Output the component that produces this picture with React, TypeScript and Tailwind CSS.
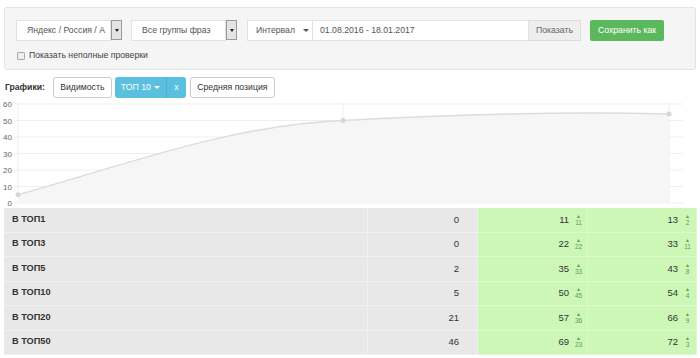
import React from "react";

const rows = [
  { label: "В ТОП1", a: 0, b: 11, bd: 11, c: 13, cd: 2 },
  { label: "В ТОП3", a: 0, b: 22, bd: 22, c: 33, cd: 11 },
  { label: "В ТОП5", a: 2, b: 35, bd: 33, c: 43, cd: 8 },
  { label: "В ТОП10", a: 5, b: 50, bd: 45, c: 54, cd: 4 },
  { label: "В ТОП20", a: 21, b: 57, bd: 36, c: 66, cd: 9 },
  { label: "В ТОП50", a: 46, b: 69, bd: 23, c: 72, cd: 3 },
];

const font = { fontFamily: '"Liberation Sans", Arial, sans-serif' };

function SelectBox({ text, width }: { text: string; width: string }) {
  return (
    <div className="flex h-[21px]">
      <div className={`${width} h-full bg-white border border-[#e2e2e2] flex items-center pl-[10px] text-[8.7px] text-[#555] whitespace-nowrap`}>
        {text}
      </div>
      <div className="w-[11px] h-[20px] bg-[#e4e4e4] border border-[#9a9a9a] flex items-center justify-center">
        <span className="block w-0 h-0 border-l-[2.5px] border-r-[2.5px] border-t-[3px] border-l-transparent border-r-transparent border-t-[#222]" />
      </div>
    </div>
  );
}

function Cell({ value, delta, green }: { value: number; delta?: number; green?: boolean }) {
  return (
    <div className={`flex items-center justify-end pr-[2px] border-b border-r ${green ? "bg-[#cdf7b7] border-[#dcf9cc]" : "bg-[#e8e8e8] border-[#f1f1f1]"}`}>
      <span className="text-[9.5px] text-[#333] pr-[3px]">{value}</span>
      <span className="w-[13px] flex flex-col items-center leading-none text-[#5aa046]">
        {delta !== undefined && (
          <>
            <span className="text-[5px] leading-[6px]">▲</span>
            <span className="text-[6.5px] leading-[8px]">{delta}</span>
          </>
        )}
      </span>
    </div>
  );
}

function Chart() {
  const y = (v: number) => 103 - v * 1.65;
  const ticks = [0, 10, 20, 30, 40, 50, 60];
  const line = `M18,${y(5)} C130,${y(24)} 230,${y(47)} 343,${y(50)} C450,${y(53.6)} 560,${y(55.5)} 669,${y(54)}`;
  return (
    <svg width="700" height="107" className="block">
      {ticks.map((t) => (
        <g key={t}>
          <line x1="15" x2="683" y1={y(t)} y2={y(t)} stroke="#efefef" strokeWidth="1" />
          <text x="12" y={y(t) + 3} textAnchor="end" fontSize="8" fill="#666" style={font}>
            {t}
          </text>
        </g>
      ))}
      {[18, 343, 669].map((x) => (
        <line key={x} x1={x} x2={x} y1={y(60) - 2} y2={y(0)} stroke="#f0f0f0" strokeWidth="1" />
      ))}
      <path d={`${line} L669,${y(0)} L18,${y(0)} Z`} fill="#f6f6f6" />
      <path d={line} fill="none" stroke="#dcdcdc" strokeWidth="1.5" />
      {[
        [18, 5],
        [343, 50],
        [669, 54],
      ].map(([x, v]) => (
        <circle key={x} cx={x} cy={y(v)} r="2.5" fill="#d6d6d6" />
      ))}
    </svg>
  );
}

export default function App() {
  return (
    <div className="w-[700px] h-[358px] bg-white overflow-hidden text-[#333]" style={font}>
      <div className="mx-[4px] mt-[7px] h-[63px] bg-[#f5f5f5] border border-[#e3e3e3] rounded-[3px] pl-[11px] pt-[12px]">
        <div className="flex items-center">
          <SelectBox text="Яндекс / Россия / А" width="w-[95px]" />
          <div className="w-[9px]" />
          <SelectBox text="Все группы фраз" width="w-[95px]" />
          <div className="w-[10px]" />
          <div className="flex h-[21px]">
            <div className="w-[66px] bg-white border border-[#e2e2e2] flex items-center pl-[8px] text-[8.7px] text-[#555] whitespace-nowrap">
              Интервал
              <span className="ml-[8px] block w-0 h-0 border-l-[3px] border-r-[3px] border-t-[3px] border-l-transparent border-r-transparent border-t-[#555]" />
            </div>
            <div className="w-[216px] bg-white border border-l-0 border-[#e2e2e2] flex items-center pl-[7px] text-[8.7px] text-[#555]">
              01.08.2016 - 18.01.2017
            </div>
            <div className="w-[52px] bg-[#eeeeee] border border-l-0 border-[#dcdcdc] flex items-center justify-center text-[8.7px] text-[#666]">
              Показать
            </div>
          </div>
          <div className="ml-[9px] w-[74px] h-[21px] bg-[#5cb85c] rounded-[2px] flex items-center justify-center text-[8.7px] text-white whitespace-nowrap">
            Сохранить как
          </div>
        </div>
        <div className="flex items-center mt-[8px] ml-[1px]">
          <span className="w-[8px] h-[8px] border border-[#aaa] bg-[#eee] rounded-[1px]" />
          <span className="ml-[4px] text-[8.7px] text-[#444]">Показать неполные проверки</span>
        </div>
      </div>

      <div className="flex items-center mt-[7px] h-[21px]">
        <span className="ml-[5px] text-[8.6px] font-bold text-[#333]">Графики:</span>
        <div className="ml-[8px] w-[59px] h-full bg-white border border-[#ccc] rounded-[3px] flex items-center justify-center text-[8.7px]">
          Видимость
        </div>
        <div className="ml-[3px] flex h-full rounded-[3px] overflow-hidden bg-[#5bc0de] text-white text-[8.7px]">
          <div className="w-[52px] flex items-center justify-center border-r border-[#49b3d3]">
            ТОП 10
            <span className="ml-[3px] block w-0 h-0 border-l-[3px] border-r-[3px] border-t-[3px] border-l-transparent border-r-transparent border-t-white" />
          </div>
          <div className="w-[19px] flex items-center justify-center">x</div>
        </div>
        <div className="ml-[4px] w-[85px] h-full bg-white border border-[#ccc] rounded-[3px] flex items-center justify-center text-[8.7px]">
          Средняя позиция
        </div>
      </div>

      <div className="mt-[2px]">
        <Chart />
      </div>

      <div className="ml-[4px] mt-[1px] w-[693px] grid grid-cols-[364px_110px_110px_109px] auto-rows-[24.5px]">
        {rows.map((r) => (
          <React.Fragment key={r.label}>
            <div className="bg-[#e8e8e8] border-b border-r border-[#f1f1f1] flex items-center pl-[8px] text-[9.2px] font-bold text-[#333]">
              {r.label}
            </div>
            <Cell value={r.a} />
            <Cell value={r.b} delta={r.bd} green />
            <Cell value={r.c} delta={r.cd} green />
          </React.Fragment>
        ))}
      </div>
    </div>
  );
}
